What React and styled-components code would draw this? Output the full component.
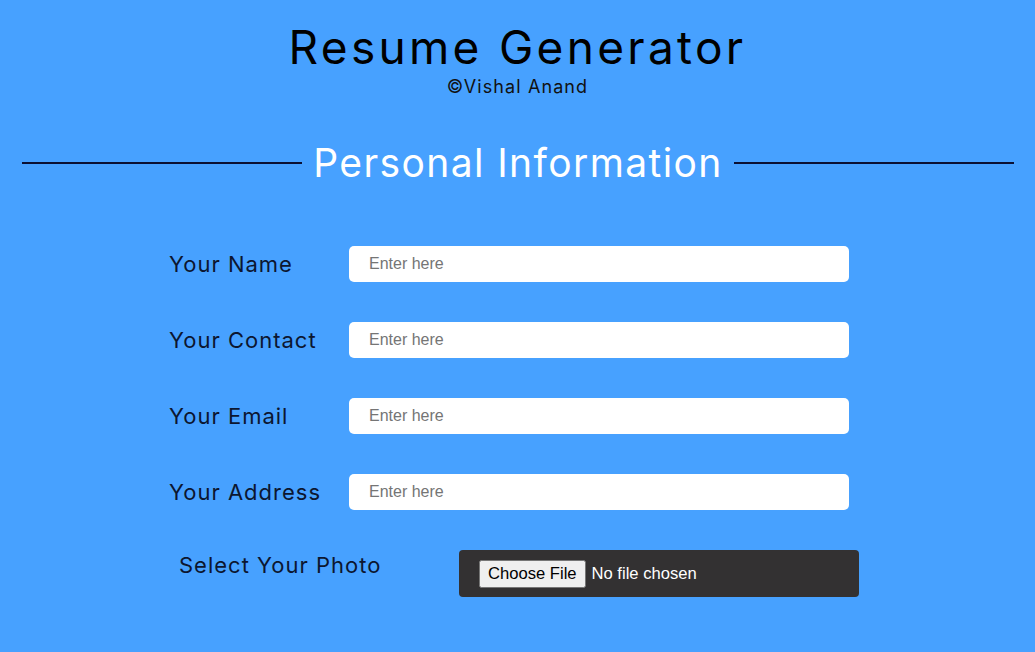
import React from "react";
import styled, { createGlobalStyle } from "styled-components";

const GlobalStyle = createGlobalStyle`
  body {
    margin: 0;
    background: #47a1ff;
    font-family: 'Inter', 'Liberation Sans', sans-serif;
  }
`

const Root = styled.div`
  width: 1035px;
  min-height: 652px;
  background: #47a1ff;
  padding-top: 18px;
  box-sizing: border-box;
`
const Header = styled.header`
  text-align: center;
  color: #000;
`
const Title = styled.h1`
  margin: 0;
  font-size: 46px;
  font-weight: 400;
  line-height: 58px;
  letter-spacing: 3.3px;
`
const Credit = styled.div`
  font-size: 18px;
  line-height: 22px;
  letter-spacing: 1.1px;
  color: #111;
`
const SectionHead = styled.div`
  display: flex;
  align-items: center;
  gap: 11px;
  padding: 0 21px 0 22px;
  margin-top: 42px;
`
const Rule = styled.div`
  flex: 1;
  height: 2px;
  background: #0b1033;
`
const SectionTitle = styled.h2`
  margin: 0;
  font-size: 39px;
  font-weight: 400;
  letter-spacing: 1.4px;
  color: #fff;
  line-height: 46px;
`
const Form = styled.form`
  display: flex;
  flex-direction: column;
  gap: 40px;
  padding-left: 169px;
  margin-top: 60px;
`
const Row = styled.div`
  display: flex;
  align-items: center;
`
const Label = styled.label`
  width: ${(props) => props.width || 180}px;
  box-sizing: border-box;
  font-size: 22px;
  letter-spacing: 1px;
  color: #0c1630;
  padding-left: ${(props) => props.indent || 0}px;
`
const TextInput = styled.input`
  width: 500px;
  height: 36px;
  box-sizing: border-box;
  border: none;
  border-radius: 5px;
  padding: 0 20px;
  font-family: 'Liberation Sans', Arial, sans-serif;
  font-size: 16px;
  outline: none;
  &::placeholder {
    color: #757575;
  }
`
const PhotoRow = styled.div`
  display: flex;
  align-items: flex-start;
`
const FileBox = styled.div`
  width: 400px;
  height: 47px;
  box-sizing: border-box;
  background: #333132;
  border-radius: 4px;
  padding: 0 20px;
  display: flex;
  align-items: center;
  color: #fff;
`
const FileInput = styled.input`
  font-family: 'Liberation Sans', Arial, sans-serif;
  font-size: 16.6px;
  color: #fff;
  &::file-selector-button {
    font-family: 'Liberation Sans', Arial, sans-serif;
    font-size: 16.6px;
    padding: 2px 7px;
    margin-right: 6px;
  }
`
const PhotoLabel = styled(Label)`
  line-height: 30px;
`

const fields = ["Your Name", "Your Contact", "Your Email", "Your Address"]

export default function App() {
  return (
    <Root>
      <GlobalStyle />
      <Header>
        <Title>Resume Generator</Title>
        <Credit>©Vishal Anand</Credit>
      </Header>
      <SectionHead>
        <Rule />
        <SectionTitle>Personal Information</SectionTitle>
        <Rule />
      </SectionHead>
      <Form>
        {fields.map((f) => (
          <Row key={f}>
            <Label width={180}>{f}</Label>
            <TextInput placeholder="Enter here" />
          </Row>
        ))}
        <PhotoRow>
          <PhotoLabel width={290} indent={10}>Select Your Photo</PhotoLabel>
          <FileBox>
            <FileInput type="file" />
          </FileBox>
        </PhotoRow>
      </Form>
    </Root>
  )
}
